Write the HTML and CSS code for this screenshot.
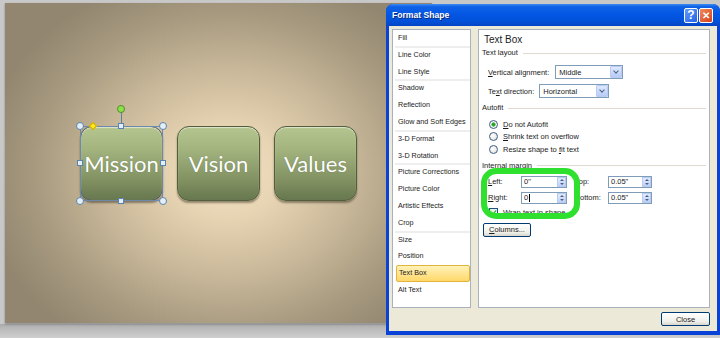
FILE: index.html
```html
<!DOCTYPE html>
<html lang="en">
<head>
    <meta charset="UTF-8">
    <meta name="viewport" content="width=device-width, initial-scale=1.0">
    <title>Format Shape</title>
    <link rel="stylesheet" href="styles.css">
</head>
<body>
    <div class="workspace">
        <div class="slide">
            <div class="shapes">
                <div class="shape selected">
                    Mission
                    <span class="sel-frame"></span>
                    <span class="rot-line"></span>
                    <span class="handle rot"></span>
                    <span class="handle adj"></span>
                    <span class="handle corner tl"></span>
                    <span class="handle corner tr"></span>
                    <span class="handle corner bl"></span>
                    <span class="handle corner br"></span>
                    <span class="handle side tm"></span>
                    <span class="handle side bm"></span>
                    <span class="handle side ml"></span>
                    <span class="handle side mr"></span>
                </div>
                <div class="shape">Vision</div>
                <div class="shape">Values</div>
            </div>
        </div>

        <div class="dialog">
            <div class="titlebar">
                <span class="title">Format Shape</span>
                <span class="tb-btn help">?</span>
                <span class="tb-btn close">&#x2715;</span>
            </div>
            <div class="dialog-body">
                <ul class="nav">
                    <li>Fill</li>
                    <li class="sep"></li>
                    <li>Line Color</li>
                    <li>Line Style</li>
                    <li class="sep"></li>
                    <li>Shadow</li>
                    <li>Reflection</li>
                    <li>Glow and Soft Edges</li>
                    <li class="sep"></li>
                    <li>3-D Format</li>
                    <li>3-D Rotation</li>
                    <li class="sep"></li>
                    <li>Picture Corrections</li>
                    <li>Picture Color</li>
                    <li>Artistic Effects</li>
                    <li>Crop</li>
                    <li class="sep"></li>
                    <li>Size</li>
                    <li>Position</li>
                    <li class="active">Text Box</li>
                    <li>Alt Text</li>
                </ul>

                <div class="panel">
                    <div class="panel-title">Text Box</div>

                    <div class="group">Text layout</div>
                    <div class="row row-valign">
                        <span class="lbl"><u>V</u>ertical alignment:</span>
                        <span class="select w68"><span class="val">Middle</span><span class="drop"></span></span>
                    </div>
                    <div class="row row-dir">
                        <span class="lbl">Te<u>x</u>t direction:</span>
                        <span class="select w70"><span class="val">Horizontal</span><span class="drop"></span></span>
                    </div>

                    <div class="group">Autofit</div>
                    <div class="radio-row"><span class="radio on"></span><span><u>D</u>o not Autofit</span></div>
                    <div class="radio-row"><span class="radio"></span><span><u>S</u>hrink text on overflow</span></div>
                    <div class="radio-row"><span class="radio"></span><span>Resize shape to <u>f</u>it text</span></div>

                    <div class="group">Internal margin</div>
                    <div class="margins">
                        <span class="lbl"><u>L</u>eft:</span>
                        <span class="spin"><span class="val">0"</span><span class="arrows"></span></span>
                        <span class="lbl lbl-right"><u>T</u>op:</span>
                        <span class="spin"><span class="val">0.05"</span><span class="arrows"></span></span>
                        <span class="lbl"><u>R</u>ight:</span>
                        <span class="spin"><span class="val">0<span class="caret"></span></span><span class="arrows"></span></span>
                        <span class="lbl lbl-right"><u>B</u>ottom:</span>
                        <span class="spin"><span class="val">0.05"</span><span class="arrows"></span></span>
                    </div>
                    <div class="check-row"><span class="check"></span><span><u>W</u>rap text in shape</span></div>
                    <span class="xp-btn columns"><span><u>C</u>olumns...</span></span>

                    <span class="highlight"></span>
                </div>

                <div class="footer">
                    <span class="xp-btn close-btn">Close</span>
                </div>
            </div>
        </div>
    </div>
</body>
</html>
```

FILE: styles.css
```css
*{
    box-sizing: border-box;
}
body{
    margin: 0;
    background-color: #c9c9c9;
    font-family: "Liberation Sans", Arial, sans-serif;
}
.workspace{
    position: relative;
    width: 720px;
    height: 338px;
    overflow: hidden;
    background: linear-gradient(#c8c8c8 0, #c8c8c8 324px, #a9a9a9 324px, #b8b8b8 328px, #cfcfcf 338px);
}

/* slide */
.slide{
    margin: 3px 0 0 5px;
    width: 427px;
    height: 320px;
    background: radial-gradient(ellipse 58% 64% at 52% 53%, #f1e1c3 0%, #e7d4b3 22%, #c7b698 52%, #a6997f 78%, #928670 100%);
    box-shadow: 0 1px 2px rgba(0,0,0,0.35);
}
.shapes{
    display: flex;
    gap: 14px;
    padding: 123px 0 0 75px;
}
.shape{
    position: relative;
    width: 83px;
    height: 75px;
    border: 1px solid #525e3c;
    border-radius: 12px;
    background: linear-gradient(#b5c58f 0%, #a3b47f 30%, #7f8f60 75%, #67774f 100%);
    box-shadow: inset 0 1px 1px rgba(255,255,255,0.55), 0 2px 2px rgba(40,35,20,0.45);
    color: #fff;
    font-family: Lato, "Liberation Sans", sans-serif;
    font-size: 22px;
    display: flex;
    align-items: center;
    justify-content: center;
    text-shadow: 0 0 1px rgba(0,0,0,0.3);
}
.selected{
    border-color: #4d5d6e;
}
.sel-frame{
    position: absolute;
    inset: -1px;
    border: 1px solid #6d88aa;
}
.rot-line{
    position: absolute;
    left: 40px;
    top: -15px;
    width: 1px;
    height: 14px;
    background-color: #5f7f9f;
}
.handle{
    position: absolute;
    border: 1px solid #5b83ad;
    background: #e4eef8;
}
.corner{
    width: 8px;
    height: 8px;
    border-radius: 50%;
}
.tl{ left: -5px; top: -5px; }
.tr{ right: -5px; top: -5px; }
.bl{ left: -5px; bottom: -5px; }
.br{ right: -5px; bottom: -5px; }
.side{
    width: 6px;
    height: 6px;
}
.tm{ left: 37px; top: -4px; }
.bm{ left: 37px; bottom: -4px; }
.ml{ left: -4px; top: 33px; }
.mr{ right: -4px; top: 33px; }
.rot{
    left: 36px;
    top: -22px;
    width: 8px;
    height: 8px;
    border-radius: 50%;
    border-color: #4e8f2a;
    background: #8ee04a;
}
.adj{
    left: 9px;
    top: -4px;
    width: 6px;
    height: 6px;
    transform: rotate(45deg);
    border-color: #c8a800;
    background: #ffe820;
}

/* dialog */
.dialog{
    position: absolute;
    left: 386px;
    top: 4px;
    width: 334px;
    height: 331px;
    background-color: #0842d6;
    border-radius: 7px 7px 0 0;
    display: flex;
    flex-direction: column;
    font-size: 7.5px;
    color: #1b1b1b;
}
.titlebar{
    height: 22px;
    flex: none;
    display: flex;
    align-items: center;
    gap: 1px;
    padding: 0 7px 0 6px;
    border-radius: 7px 7px 0 0;
    background: linear-gradient(#3d8cf5 0%, #0f62e6 12%, #0357e4 45%, #0350d8 80%, #0544c4 100%);
}
.title{
    flex: 1;
    color: #fff;
    font-weight: bold;
    font-size: 8.6px;
    text-shadow: 1px 1px 0 #0a2a7a;
}
.tb-btn{
    width: 14px;
    height: 15px;
    border: 1px solid #fff;
    border-radius: 2px;
    color: #fff;
    font-weight: bold;
    display: flex;
    align-items: center;
    justify-content: center;
}
.help{
    font-size: 12px;
    background: linear-gradient(135deg, #5f9bff, #2763e4);
}
.close{
    font-size: 10px;
    background: linear-gradient(135deg, #f08a5e, #d6401a);
}
.dialog-body{
    flex: 1;
    margin: 0 3px 4px 3px;
    padding: 3px 7px 0 3px;
    background-color: #ece9d8;
    display: grid;
    grid-template-columns: 79px 1fr;
    grid-template-rows: 279px auto;
    column-gap: 7px;
}

.nav{
    list-style: none;
    margin: 0;
    padding: 0 0 0 2px;
    background-color: #fff;
    border: 1px solid #a9b2bc;
    display: flex;
    flex-direction: column;
    font-size: 7.2px;
}
.nav li{
    height: 16.8px;
    line-height: 16.8px;
    padding-left: 3px;
    white-space: nowrap;
    color: #222;
}
.nav .sep{
    height: 0;
    border-top: 2px solid #eeeeee;
    margin: -1px 0;
    padding: 0;
}
.nav .active{
    margin-left: 1px;
    padding-left: 2px;
    border: 1px solid #e3b43c;
    border-radius: 2px;
    background: linear-gradient(#fff2b8, #ffd86a);
    line-height: 14.8px;
}

.panel{
    position: relative;
    background-color: #fff;
    border: 1px solid #a9b2bc;
    display: flex;
    flex-direction: column;
    align-items: flex-start;
}
.panel-title{
    padding: 3px 0 0 5px;
    line-height: 14px;
    font-size: 10px;
}
.group{
    align-self: stretch;
    display: flex;
    align-items: center;
    padding: 0 3px 0 3px;
    line-height: 12px;
    margin-top: 4px;
}
.panel-title + .group{
    margin-top: 0;
}
.group::after{
    content: "";
    flex: 1;
    height: 1px;
    margin-left: 5px;
    background-color: #dedad0;
}
.row{
    display: flex;
    align-items: center;
    padding-left: 9px;
    height: 14px;
}
.row-valign{
    margin-top: 6px;
    gap: 6px;
}
.row-dir{
    margin-top: 5px;
    gap: 5px;
}
.select{
    height: 14px;
    border: 1px solid #7f9db9;
    display: flex;
    align-items: center;
    justify-content: space-between;
    padding-left: 3px;
}
.w68{ width: 68px; }
.w70{ width: 70px; }
.drop{
    position: relative;
    width: 12px;
    height: 12px;
    border: 1px solid #b8cbf2;
    border-radius: 1px;
    background: linear-gradient(#dfe8fd, #b7cbf8);
}
.drop::after{
    content: "";
    position: absolute;
    left: 3px;
    top: 2px;
    width: 3px;
    height: 3px;
    border-right: 1.5px solid #4d6185;
    border-bottom: 1.5px solid #4d6185;
    transform: rotate(45deg);
}
.radio-row{
    display: flex;
    align-items: center;
    gap: 5px;
    height: 12.5px;
    padding-left: 10px;
}
.group + .radio-row{
    margin-top: 4px;
}
.radio{
    width: 9px;
    height: 9px;
    border-radius: 50%;
    border: 1px solid #3f5f86;
    background: radial-gradient(circle at 40% 40%, #fff, #dcdcd4);
}
.radio.on{
    background: radial-gradient(circle, #2aa52a 0, #2aa52a 1.8px, #ffffff 2.4px, #e0e0d8 100%);
}
.margins{
    margin-top: 4px;
    padding-left: 9px;
    display: grid;
    grid-template-columns: 33px 46px 41px 44px;
    grid-auto-rows: 12px;
    row-gap: 4px;
    align-items: center;
}
.lbl-right{
    padding-left: 8px;
}
.spin{
    height: 12px;
    border: 1px solid #7f9db9;
    display: flex;
    align-items: center;
    justify-content: space-between;
    padding-left: 2px;
}
.caret{
    display: inline-block;
    width: 1px;
    height: 8px;
    margin-left: 1px;
    vertical-align: middle;
    background-color: #000;
}
.arrows{
    position: relative;
    width: 9px;
    height: 10px;
    border: 1px solid #b8cbf2;
    background: linear-gradient(#e3ebfd, #bfd0f8);
}
.arrows::before,
.arrows::after{
    content: "";
    position: absolute;
    left: 2px;
    border-left: 2px solid transparent;
    border-right: 2px solid transparent;
}
.arrows::before{
    top: 1px;
    border-bottom: 2px solid #4d6185;
}
.arrows::after{
    bottom: 1px;
    border-top: 2px solid #4d6185;
}
.check-row{
    display: flex;
    align-items: center;
    gap: 5px;
    height: 12px;
    margin-top: 3px;
    padding-left: 10px;
}
.check{
    position: relative;
    width: 9px;
    height: 9px;
    border: 1px solid #1c5180;
    background: linear-gradient(135deg, #e6e6df, #fff);
}
.check::after{
    content: "";
    position: absolute;
    left: 2px;
    top: 0;
    width: 2px;
    height: 5px;
    border-right: 1.5px solid #21a121;
    border-bottom: 1.5px solid #21a121;
    transform: rotate(40deg);
}
.xp-btn{
    height: 14px;
    border: 1px solid #003c74;
    border-radius: 2px;
    background: linear-gradient(#ffffff, #f0f0ea 70%, #d8d6cc);
    display: flex;
    align-items: center;
    justify-content: center;
}
.columns{
    width: 48px;
    margin: 4px 0 0 4px;
}
.highlight{
    position: absolute;
    left: 2px;
    top: 138px;
    width: 99px;
    height: 51px;
    border: 6px solid #2fe02f;
    border-radius: 15px;
}
.footer{
    grid-column: 1 / 3;
    display: flex;
    justify-content: flex-end;
    padding-top: 4px;
}
.close-btn{
    width: 49px;
}
```
